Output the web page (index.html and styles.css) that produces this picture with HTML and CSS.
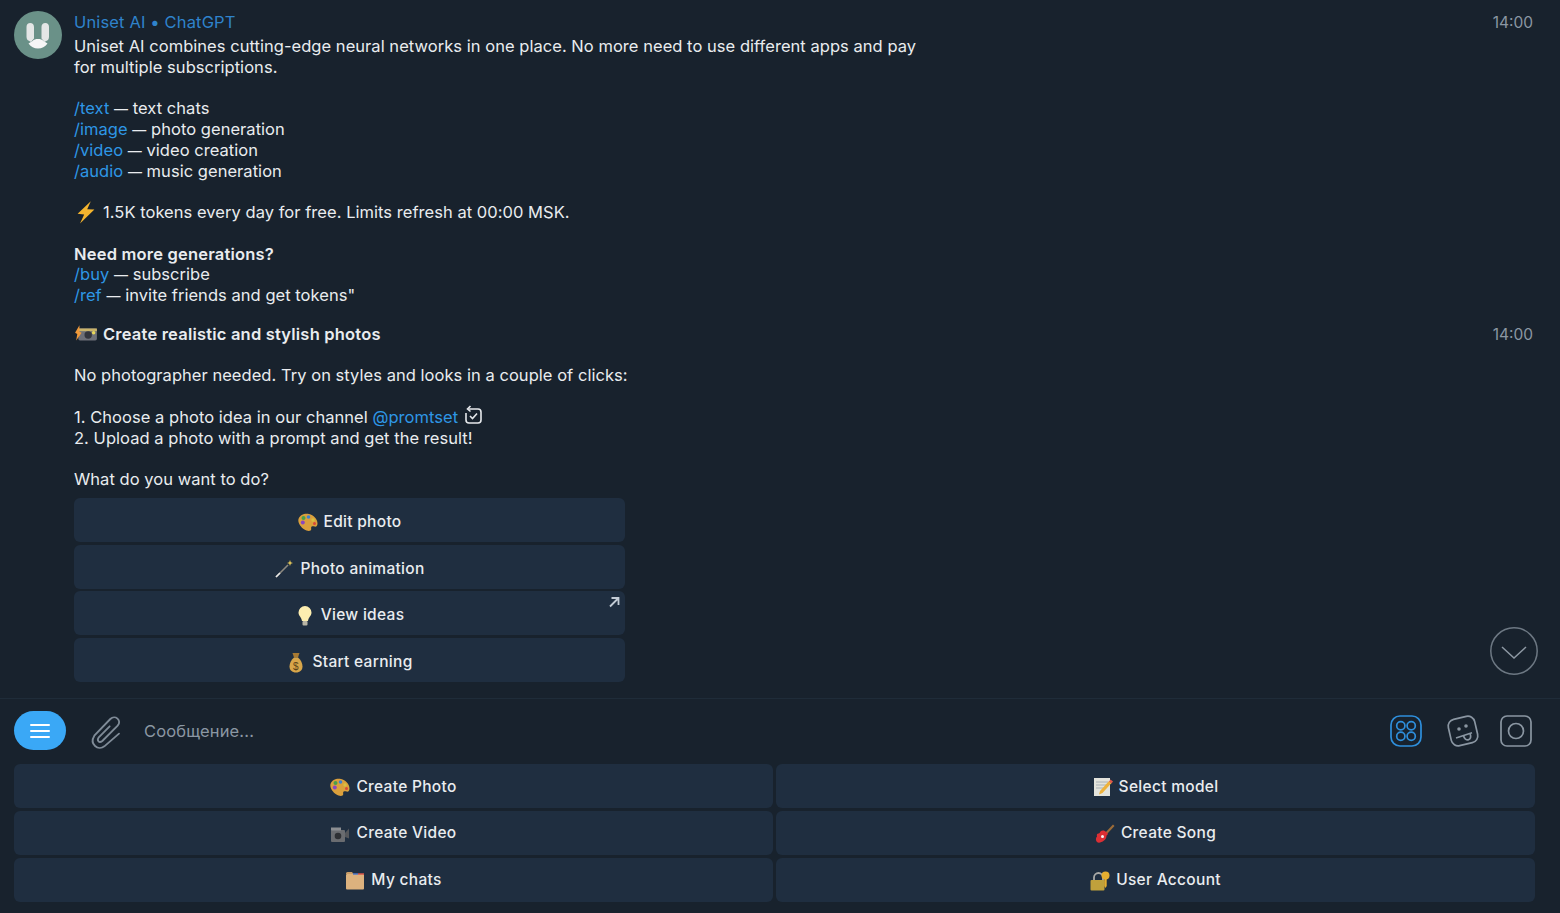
FILE: index.html
```html
<!DOCTYPE html>
<html lang="en">
<head>
    <meta charset="UTF-8">
    <meta name="viewport" content="width=device-width, initial-scale=1.0">
    <title>Uniset AI</title>
    <link rel="stylesheet" href="styles.css">
</head>
<body>
    <svg class="defs" width="0" height="0">
        <symbol id="palette" viewBox="0 0 20 20">
            <path d="M.5 7C2 2.500 7 1 11 2c4.500 1.200 8.500 5 8.500 9.500 0 2.500-1.200 3.500-3 3-1.500-.5-3-.5-3.300.8-.3 1.500.5 2.200-.7 3.200-1.500 1-4 .3-6.500-1.200C3 15 -.5 11 .5 7z" fill="#dba03c"/>
            <circle cx="5.500" cy="6" r="2" fill="#4aa04a"/>
            <circle cx="10.500" cy="5" r="1.800" fill="#3f7fd0"/>
            <circle cx="15" cy="8" r="1.700" fill="#d8c040"/>
            <circle cx="4.800" cy="10.500" r="2" fill="#8a46c0"/>
            <circle cx="16.500" cy="11.500" r="1.500" fill="#d94a3a"/>
        </symbol>
    </svg>

    <div class="chat">
        <div class="msg">
            <div class="avatar">
                <svg viewBox="0 0 48 48" width="48" height="48">
                    <path d="M12.500 16c0-2.500 1.500-4 3.700-4s3.800 1.500 3.800 4v11.500l-3 3.500-3.500-2c-.7-1-1-2-1-3z" fill="#e4e6e6"/>
                    <path d="M27.500 16c0-2.500 1.500-4 3.800-4s3.700 1.500 3.700 4v10c0 1-.3 2-1 3l-3.500 2-3-3.500z" fill="#e4e6e6"/>
                    <path d="M14.500 32.500l4-2.500c1.500-1.500 3-2 5.500-2s4 .5 5.500 2l4 2.500c-2.500 3.500-5.500 5-9.500 5s-7-1.500-9.500-5z" fill="#f6f6f6"/>
                </svg>
            </div>
            <div class="msg-body">
                <div class="sender">Uniset AI • ChatGPT</div>
                <div class="line">Uniset AI combines cutting-edge neural networks in one place. No more need to use different apps and pay</div>
                <div class="line">for multiple subscriptions.</div>
                <div class="line">&nbsp;</div>
                <div class="line"><span class="link">/text</span> <span class="dash">—</span> text chats</div>
                <div class="line"><span class="link">/image</span> <span class="dash">—</span> photo generation</div>
                <div class="line"><span class="link">/video</span> <span class="dash">—</span> video creation</div>
                <div class="line"><span class="link">/audio</span> <span class="dash">—</span> music generation</div>
                <div class="line">&nbsp;</div>
                <div class="line">
                    <svg class="emoji" viewBox="0 0 20 20" width="24" height="24"><path d="M14 1L3 11.500l5.500.5L5 19.500 17 8l-6-.3z" fill="#f5b52e"/></svg>1.5K tokens every day for free. Limits refresh at 00:00 MSK.
                </div>
                <div class="line">&nbsp;</div>
                <div class="line"><b>Need more generations?</b></div>
                <div class="line"><span class="link">/buy</span> <span class="dash">—</span> subscribe</div>
                <div class="line"><span class="link">/ref</span> <span class="dash">—</span> invite friends and get tokens"</div>
            </div>
            <div class="time">14:00</div>
        </div>

        <div class="msg second">
            <div class="avatar-space"></div>
            <div class="msg-body">
                <div class="line">
                    <svg class="emoji" viewBox="0 0 22 20" width="24" height="22">
                        <rect x="4" y="4" width="17" height="11" rx="1.500" fill="#6d6f78"/>
                        <rect x="4" y="4" width="17" height="2.500" fill="#c9b36a"/>
                        <circle cx="13" cy="10" r="3.400" fill="#33353d"/>
                        <circle cx="18" cy="8" r="1.600" fill="#e8d85a"/>
                        <path d="M5 1L1 8l2 1-1 6 5-7-2-1z" fill="#f0993a"/>
                    </svg><b>Create realistic and stylish photos</b>
                </div>
                <div class="line">&nbsp;</div>
                <div class="line">No photographer needed. Try on styles and looks in a couple of clicks:</div>
                <div class="line">&nbsp;</div>
                <div class="line">1. Choose a photo idea in our channel <span class="link">@promtset</span>
                    <svg class="inline-check" viewBox="0 0 20 20" width="20" height="20" fill="none" stroke="#e6e9ec" stroke-width="1.600">
                        <path d="M6 4h9a3 3 0 0 1 3 3v8a3 3 0 0 1-3 3H6a3 3 0 0 1-3-3V8"/>
                        <path d="M7.500 1L4.500 4l3 2.500"/>
                        <path d="M7 11l2.500 2.500L14 8.500"/>
                    </svg>
                </div>
                <div class="line">2. Upload a photo with a prompt and get the result!</div>
                <div class="line">&nbsp;</div>
                <div class="line">What do you want to do?</div>

                <div class="inline-kb">
                    <div class="kb-btn">
                        <svg class="btn-emoji" width="20" height="20"><use href="#palette"/></svg>Edit photo
                    </div>
                    <div class="kb-btn">
                        <svg class="btn-emoji" viewBox="0 0 20 20" width="20" height="20">
                            <path d="M2 18L14 6" stroke="#8d8a80" stroke-width="1.600"/>
                            <path d="M2 18l4-4" stroke="#e8e8e8" stroke-width="1.600"/>
                            <path d="M16 1l.8 2.200L19 4l-2.200.8L16 7l-.8-2.200L13 4l2.200-.8z" fill="#e6c95a"/>
                        </svg>Photo animation
                    </div>
                    <div class="kb-btn">
                        <svg class="btn-emoji" viewBox="0 0 20 20" width="20" height="20">
                            <path d="M10 0a6.500 6.500 0 0 0-6.500 6.500c0 3.500 3 4.500 3.500 8.500h6c.5-4 3.500-5 3.500-8.500A6.500 6.500 0 0 0 10 0z" fill="#fdeeb0"/>
                            <rect x="7.500" y="15" width="5" height="4.500" rx="1" fill="#b9b5a5"/>
                        </svg>View ideas
                        <svg class="corner-arrow" viewBox="0 0 12 12" width="12" height="12" fill="none" stroke="#c3ccd6" stroke-width="1.800">
                            <path d="M2 10.500L10 2.500M3.500 2h7v7"/>
                        </svg>
                    </div>
                    <div class="kb-btn">
                        <svg class="btn-emoji" viewBox="0 0 20 20" width="20" height="20">
                            <path d="M6.500 0h7L12 4.500H8z" fill="#a87a32"/>
                            <path d="M8 4.500h4c3 2.500 4.500 6 4.500 9 0 3.500-2.500 6-6.500 6s-6.500-2.500-6.500-6c0-3 1.500-6.500 4.500-9z" fill="#d8a64a"/>
                            <text x="10" y="16.500" font-size="10" text-anchor="middle" fill="#5a4218" font-family="Liberation Sans">$</text>
                        </svg>Start earning
                    </div>
                </div>
            </div>
            <div class="time">14:00</div>
        </div>

        <div class="scroll-down">
            <svg viewBox="0 0 48 48" width="48" height="48" fill="none" stroke="#6d7883" stroke-width="1.500">
                <circle cx="24" cy="24" r="23.200"/>
                <path d="M12 20l12 11 12-11" stroke="#8d98a3"/>
            </svg>
        </div>
    </div>

    <div class="input-bar">
        <div class="menu-btn">
            <svg viewBox="0 0 20 16" width="20" height="16" fill="none" stroke="#fff" stroke-width="2" stroke-linecap="round">
                <path d="M1 2h18M1 8h18M1 14h18"/>
            </svg>
        </div>
        <svg class="clip" viewBox="0 0 120 120" width="40" height="40" fill="none" stroke="#7f8b97" stroke-width="5.500" stroke-linecap="round">
            <path d="M102 68L58 106C40 120 12 100 28 74L76 24C90 10 112 28 98 44L52 90C42 98 34 88 42 78L74 46"/>
        </svg>
        <div class="placeholder">Сообщение...</div>
        <div class="bar-icons">
            <svg class="grid-icon" viewBox="0 0 32 32" width="32" height="32" fill="none" stroke="#2e8fdc" stroke-width="1.700">
                <rect x="1" y="1" width="30" height="30" rx="9"/>
                <circle cx="10.800" cy="10.800" r="4.100"/><circle cx="21.200" cy="10.800" r="4.100"/>
                <circle cx="10.800" cy="21.200" r="4.100"/><circle cx="21.200" cy="21.200" r="4.100"/>
            </svg>
            <svg viewBox="0 0 34 34" width="34" height="34" fill="none" stroke="#8a96a2" stroke-width="1.700">
                <rect x="3.500" y="3.500" width="27" height="27" rx="7" transform="rotate(-13 17 17)"/>
                <circle cx="13" cy="15" r="1.800" fill="#8a96a2" stroke="none"/>
                <circle cx="20" cy="12" r="1.800" fill="#8a96a2" stroke="none"/>
                <path d="M10 24l16-5.300"/>
                <path d="M17.500 21.500c.5 3 3 5 5 4.300s2.500-3.500 1.500-6.500"/>
            </svg>
            <svg viewBox="0 0 32 32" width="32" height="32" fill="none" stroke="#8a96a2" stroke-width="1.700">
                <rect x="1" y="1" width="30" height="30" rx="6"/>
                <circle cx="16" cy="16" r="7.500"/>
            </svg>
        </div>
    </div>

    <div class="reply-kb">
        <div class="kb-btn">
            <svg class="btn-emoji" width="20" height="20"><use href="#palette"/></svg>Create Photo
        </div>
        <div class="kb-btn">
            <svg class="btn-emoji" viewBox="0 0 20 20" width="20" height="20">
                <rect x="1" y="1" width="16" height="18" fill="#e3e3dc"/>
                <path d="M3 5h12M3 8h12M3 11h8" stroke="#a9b0b5"/>
                <path d="M7 14L16 4l2.500 2-9 10-3.500 1.500z" fill="#eeb23c"/>
                <path d="M16 4.500l1.500-2 2.500 2-1.500 2z" fill="#e0584a"/>
            </svg>Select model
        </div>
        <div class="kb-btn">
            <svg class="btn-emoji" viewBox="0 0 20 20" width="20" height="20">
                <rect x="1" y="6" width="14" height="12" rx="1" fill="#6a6c70"/>
                <rect x="1" y="3.500" width="10" height="3" fill="#8c8e92"/>
                <circle cx="8" cy="12" r="3.300" fill="#2e3034"/>
                <path d="M15 9l4-4.500v10L15 13z" fill="#55575b"/>
            </svg>Create Video
        </div>
        <div class="kb-btn">
            <svg class="btn-emoji" viewBox="0 0 20 20" width="20" height="20">
                <path d="M10 9l8-8.500 1.500 1.500-8 8.500z" fill="#9c6c38"/>
                <path d="M6 7c1.500-1 3.500-1 6 1.500 1 1 1 2.500-.5 3 0 2.500-1 4-2.500 5-2.500 2-5.500 3-7 1.500s-1.500-4 0-5.500c-.5-2 0-3 1.500-3 1 0 1.500-1.500 2.500-2.500z" fill="#dc2f34"/>
                <circle cx="7.500" cy="12.500" r="1.500" fill="#f5f5f5"/>
            </svg>Create Song
        </div>
        <div class="kb-btn">
            <svg class="btn-emoji" viewBox="0 0 20 20" width="20" height="20">
                <rect x="1" y="3" width="18" height="15.500" rx="1" fill="#dcb27e"/>
                <path d="M1 5V2.500C1 2 1.500 1 2.500 1H7l1.500 2H1z" fill="#c99c66"/>
                <path d="M8 3h5" stroke="#5079c8" stroke-width="1.500"/>
                <path d="M13 3h6" stroke="#d9564a" stroke-width="1.500"/>
            </svg>My chats
        </div>
        <div class="kb-btn">
            <svg class="btn-emoji" viewBox="0 0 20 20" width="20" height="20">
                <path d="M4 10V6.500a4.500 4.500 0 0 1 9 0V10" fill="none" stroke="#a8a9a6" stroke-width="1.800"/>
                <rect x="0.500" y="9" width="14" height="10.500" rx="1" fill="#c0a13c"/>
                <circle cx="15.500" cy="4.500" r="4" fill="#e5ae30"/>
                <path d="M14.300 7h2.400v8l-1.200 2-1.200-2z" fill="#e5ae30"/>
            </svg>User Account
        </div>
    </div>
</body>
</html>
```

FILE: styles.css
```css
html, body {
    margin: 0;
    height: 913px;
    overflow: hidden;
}

body {
    background-color: #18222d;
    color: #e9ecef;
    font-family: Inter, "Noto Sans", sans-serif;
    font-size: 16.5px;
    line-height: 20.75px;
}

.defs {
    display: block;
    height: 0;
}

.chat {
    height: 698px;
    padding-top: 12px;
    box-sizing: border-box;
    position: relative;
}

.msg {
    display: flex;
    padding: 0 27px 0 14px;
}

.msg.second {
    margin-top: 18px;
}

.avatar {
    width: 48px;
    height: 48px;
    border-radius: 50%;
    background-color: #6a9188;
    flex-shrink: 0;
    margin-top: -1px;
}

.avatar-space {
    width: 48px;
    flex-shrink: 0;
}

.msg-body {
    flex: 1;
    margin-left: 12px;
}

.sender {
    color: #2f83cb;
    letter-spacing: .15px;
    margin-bottom: 3.25px;
}

.line {
    height: 20.75px;
    white-space: nowrap;
    letter-spacing: .04px;
}

.link {
    color: #2e97e6;
}

.dash {
    font-size: 14px;
}

b {
    font-weight: 600;
    letter-spacing: .2px;
}

.time {
    color: #8b97a3;
    font-size: 15.5px;
    padding-top: 1px;
    flex-shrink: 0;
}

.emoji {
    vertical-align: 0;
    margin: -6px 5px -6px 0;
}

.inline-check {
    vertical-align: 4px;
    margin: -6px 0;
}

.inline-kb {
    width: 551px;
    margin-top: 8px;
    display: flex;
    flex-direction: column;
    gap: 2.75px;
}

.kb-btn {
    height: 44px;
    box-sizing: border-box;
    padding-top: 5px;
    background-color: #1f2e40;
    border-radius: 6px;
    display: flex;
    align-items: center;
    justify-content: center;
    font-size: 15.5px;
    font-weight: 500;
    letter-spacing: .3px;
    position: relative;
}

.btn-emoji {
    margin-right: 6px;
}

.corner-arrow {
    position: absolute;
    top: 5px;
    right: 5px;
}

.scroll-down {
    position: absolute;
    top: 627px;
    right: 22px;
    width: 48px;
    height: 48px;
}

.input-bar {
    height: 66px;
    box-sizing: border-box;
    border-top: 1px solid #1f2c39;
    display: flex;
    align-items: center;
    padding: 0 28px 2px 14px;
}

.menu-btn {
    width: 52px;
    height: 39px;
    border-radius: 20px;
    background-color: #3aa8f6;
    display: flex;
    align-items: center;
    justify-content: center;
}

.clip {
    margin-left: 19px;
}

.placeholder {
    margin-left: 19px;
    padding-top: 1px;
    color: #8b97a3;
    letter-spacing: .15px;
    flex: 1;
}

.bar-icons {
    display: flex;
    align-items: center;
    gap: 20px;
}

.grid-icon {
    margin-right: 4px;
}

.reply-kb {
    margin: 0 25px 0 14px;
    display: grid;
    grid-template-columns: 1fr 1fr;
    gap: 2.75px 3px;
}

.reply-kb .kb-btn {
    padding-top: 2px;
}
```
